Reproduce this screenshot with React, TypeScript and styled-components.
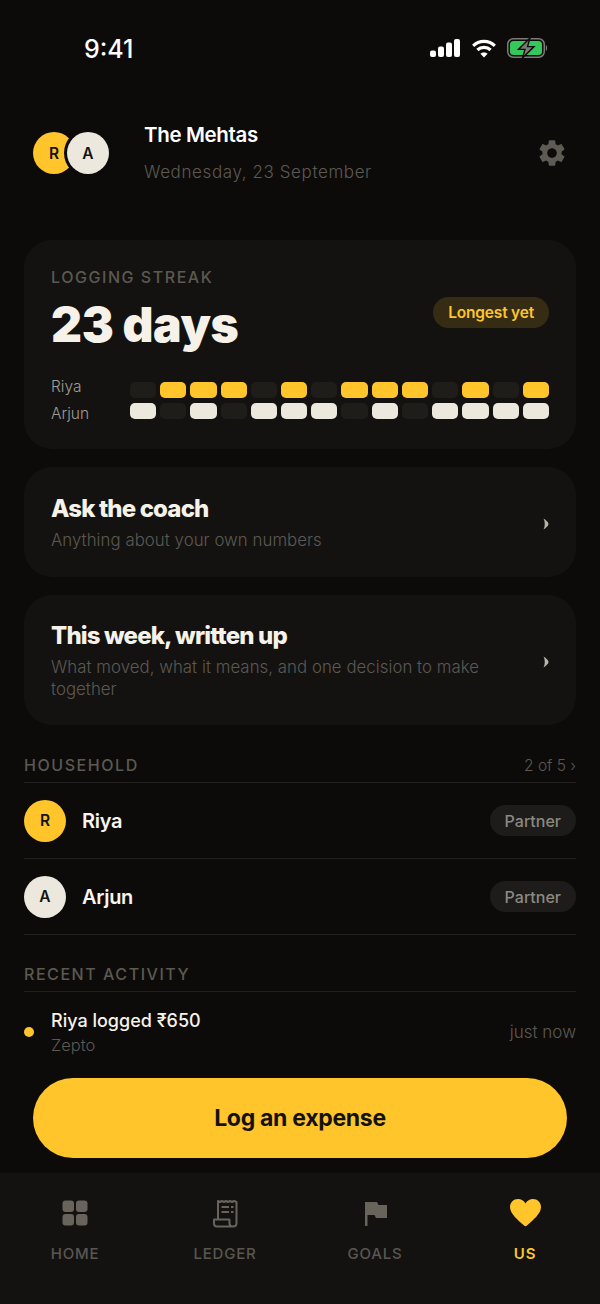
import React from 'react';
import styled, { createGlobalStyle } from 'styled-components';
import { MdSettings } from 'react-icons/md';

const FONT = `"Inter", "Liberation Sans", sans-serif`;
const PAGE = '#0c0b0a';
const YELLOW = '#ffc52b';
const CREAM = '#ece8de';
const MUTED = '#5c5952';

const GlobalStyle = createGlobalStyle`
  html, body {
    margin: 0;
    padding: 0;
    background: ${PAGE};
  }
  * {
    box-sizing: border-box;
  }
`;

const Screen = styled.div`
  position: relative;
  width: 600px;
  height: 1304px;
  overflow: hidden;
  background: ${PAGE};
  font-family: ${FONT};
  color: #fff;
  display: flex;
  flex-direction: column;
`;

const StatusBar = styled.div`
  height: 96px;
  flex-shrink: 0;
  padding: 34px 52px 0 84px;
  display: flex;
  justify-content: space-between;
  align-items: flex-start;
`;

const Clock = styled.div`
  font-size: 25px;
  line-height: 30px;
  font-weight: 500;
`;

const StatusIcons = styled.div`
  display: flex;
  align-items: center;
  gap: 11.5px;
  height: 28px;
`;

const Content = styled.div`
  flex: 1;
  min-height: 0;
  padding: 0 24px;
  display: flex;
  flex-direction: column;
`;

const Header = styled.div`
  height: 114px;
  margin-bottom: 30px;
  flex-shrink: 0;
  display: flex;
  align-items: center;
  padding: 0 8px 0 9px;
`;

const AvatarStack = styled.div`
  display: flex;
  width: 111px;
`;

const Avatar = styled.div<{ $tone: 'yellow' | 'cream'; $overlap?: boolean }>`
  width: 42px;
  height: 42px;
  border-radius: 50%;
  background: ${p => (p.$tone === 'yellow' ? YELLOW : CREAM)};
  color: #141210;
  display: flex;
  align-items: center;
  justify-content: center;
  font-size: 15.5px;
  font-weight: 600;
  flex-shrink: 0;
  ${p => p.$overlap && `margin-left: -7px; box-shadow: 0 0 0 3px ${PAGE}; position: relative; left: -1px;`}
`;

const HeaderText = styled.div`
  flex: 1;
  padding-bottom: 2px;
`;

const FamilyName = styled.div`
  font-size: 20.5px;
  line-height: 26px;
  font-weight: 600;
  letter-spacing: -0.35px;
`;

const DateLine = styled.div`
  margin-top: 13px;
  font-size: 17px;
  line-height: 22px;
  font-weight: 300;
  color: ${MUTED};
  letter-spacing: 0.6px;
`;

const Card = styled.div`
  background: #131211;
  border-radius: 28px;
  padding: 0 27px;
  flex-shrink: 0;
`;

const StreakCard = styled(Card)`
  height: 209px;
  padding-top: 27px;
  margin-bottom: 18px;
`;

const Eyebrow = styled.div`
  font-size: 16px;
  line-height: 20px;
  font-weight: 500;
  letter-spacing: 1.55px;
  color: #5c5951;
`;

const StreakTop = styled.div`
  margin-top: 10px;
  display: flex;
  justify-content: space-between;
  align-items: flex-start;
`;

const Days = styled.div`
  font-size: 48px;
  line-height: 56px;
  font-weight: 900;
  letter-spacing: -0.4px;
  color: #f6f2e9;
`;

const Badge = styled.div`
  height: 31px;
  padding: 0 15px;
  border-radius: 16px;
  background: #362c13;
  color: ${YELLOW};
  font-size: 15.5px;
  font-weight: 600;
  letter-spacing: -0.2px;
  display: flex;
  align-items: center;
`;

const Streak = styled.div`
  margin-top: 20px;
  display: flex;
  align-items: center;
`;

const StreakNames = styled.div`
  width: 79px;
  font-size: 15.5px;
  line-height: 27px;
  font-weight: 300;
  color: #a09d95;
`;

const Rows = styled.div`
  flex: 1;
  display: flex;
  flex-direction: column;
  gap: 5px;
`;

const Cells = styled.div`
  display: grid;
  grid-template-columns: repeat(14, 1fr);
  gap: 4px;
`;

const Cell = styled.div<{ $fill: string }>`
  height: 16px;
  border-radius: 5px;
  background: ${p => p.$fill};
`;

const LinkCard = styled(Card)<{ $height: number }>`
  height: ${p => p.$height}px;
  margin-bottom: 18px;
  display: flex;
  align-items: center;
  justify-content: space-between;
`;

const LinkTitle = styled.div`
  font-size: 24px;
  line-height: 30px;
  font-weight: 800;
  letter-spacing: -0.85px;
  color: #f6f2e9;
`;

const LinkSub = styled.div`
  margin-top: 5px;
  max-width: 450px;
  font-size: 16.8px;
  line-height: 22px;
  font-weight: 300;
  letter-spacing: 0.05px;
  color: ${MUTED};
`;

const Chevron = styled.svg`
  flex-shrink: 0;
  margin-top: 4px;
`;

const SectionHead = styled.div<{ $top: number }>`
  margin-top: ${p => p.$top}px;
  height: 30px;
  padding-bottom: 5px;
  border-bottom: 1px solid #1f1e1c;
  display: flex;
  align-items: center;
  justify-content: space-between;
`;

const SectionMeta = styled.div`
  font-size: 15.5px;
  font-weight: 300;
  color: ${MUTED};
`;

const MemberRow = styled.div`
  height: 76px;
  border-bottom: 1px solid #1f1e1c;
  display: flex;
  align-items: center;
  gap: 16px;
`;

const MemberName = styled.div`
  flex: 1;
  font-size: 20px;
  font-weight: 600;
  letter-spacing: -0.3px;
  color: #f8f5ee;
`;

const RolePill = styled.div`
  height: 31px;
  padding: 0 15px;
  border-radius: 16px;
  background: #1d1c1a;
  color: #8c8981;
  font-size: 16px;
  font-weight: 500;
  display: flex;
  align-items: center;
`;

const ActivityRow = styled.div`
  height: 80px;
  display: flex;
  align-items: center;
`;

const Dot = styled.div`
  width: 10px;
  height: 10px;
  border-radius: 50%;
  background: ${YELLOW};
  margin-right: 17px;
`;

const ActivityText = styled.div`
  flex: 1;
`;

const ActivityTitle = styled.div`
  font-size: 18px;
  line-height: 24px;
  font-weight: 500;
  color: #f6f2e9;
`;

const ActivitySub = styled.div`
  margin-top: 1px;
  font-size: 16.5px;
  line-height: 22px;
  font-weight: 300;
  color: ${MUTED};
`;

const ActivityTime = styled.div`
  font-size: 17px;
  font-weight: 300;
  color: ${MUTED};
`;

const Cta = styled.button`
  position: absolute;
  left: 33px;
  right: 33px;
  bottom: 146px;
  height: 80px;
  border: none;
  border-radius: 40px;
  background: ${YELLOW};
  color: #141210;
  font-family: ${FONT};
  font-size: 23px;
  font-weight: 700;
  letter-spacing: -0.3px;
`;

const TabBar = styled.nav`
  height: 131px;
  flex-shrink: 0;
  background: #131211;
  display: grid;
  grid-template-columns: repeat(4, 1fr);
`;

const Tab = styled.div<{ $active?: boolean }>`
  padding-top: 24px;
  display: flex;
  flex-direction: column;
  align-items: center;
  color: ${p => (p.$active ? YELLOW : '#5a5750')};
  font-size: 15px;
  font-weight: ${p => (p.$active ? 600 : 500)};
  letter-spacing: 0.8px;
`;

const TabIcon = styled.svg<{ $active?: boolean }>`
  width: 34px;
  height: 34px;
  margin-bottom: 13px;
  color: ${p => (p.$active ? YELLOW : '#68645b')};
`;

const RIYA = [0, 1, 1, 1, 0, 1, 0, 1, 1, 1, 0, 1, 0, 1];
const ARJUN = [1, 0, 1, 0, 1, 1, 1, 0, 1, 0, 1, 1, 1, 1];

const SignalIcon = () => (
  <svg width="30" height="18" viewBox="0 0 30 18" fill="#fff">
    <rect x="0" y="11.5" width="6" height="6.5" rx="2" />
    <rect x="8" y="7.5" width="6" height="10.5" rx="2" />
    <rect x="16" y="3.5" width="6" height="14.5" rx="2" />
    <rect x="24" y="0" width="6" height="18" rx="2" />
  </svg>
);

const WifiIcon = () => (
  <svg width="24" height="19" viewBox="0 0 24 19" fill="none" stroke="#fff" strokeWidth="3.2">
    <path d="M1.2 6.8 C7 1 17 1 22.8 6.8" />
    <path d="M5.4 11 C9 7.6 15 7.6 18.6 11" />
    <path d="M12 18.6 L8.4 14.8 C10.2 13.2 13.8 13.2 15.6 14.8 Z" fill="#fff" stroke="none" />
  </svg>
);

const BatteryIcon = () => (
  <svg width="41" height="20" viewBox="0 0 41 20">
    <rect x="0.75" y="0.75" width="36.5" height="18.5" rx="5.5" fill="none" stroke="#7b7b78" strokeWidth="1.5" />
    <rect x="3" y="3" width="32" height="14" rx="3.5" fill="#34c759" />
    <path d="M38.8 7 C40.6 7.5 40.6 12.5 38.8 13 Z" fill="#7b7b78" />
    <path d="M23 0 L11.5 11.4 H18 L15.5 20 L27 8.6 H20.5 Z" fill="#7a7a76" stroke={PAGE} strokeWidth="1.4" />
  </svg>
);

const HomeIcon = () => (
  <TabIcon viewBox="0 0 34 34" fill="currentColor">
    <rect x="4.5" y="3.5" width="11.5" height="11.5" rx="3" />
    <rect x="18" y="3.5" width="11.5" height="11.5" rx="3" />
    <rect x="4.5" y="17" width="11.5" height="11.5" rx="3" />
    <rect x="18" y="17" width="11.5" height="11.5" rx="3" />
  </TabIcon>
);

const LedgerIcon = () => (
  <TabIcon viewBox="0 0 34 34" fill="none" stroke="currentColor" strokeWidth="2">
    <path
      d="M10 22.5 V4 L12 5 L14 4 L16 5 L18 4 L20 5 L22 4 L24 5 L26 4 L28.5 5 V26 C28.5 28.2 27 29.5 25 29.5 H9 C7 29.5 6 28.2 6 26.5 V22.5 H21.5 V26.5 C21.5 28.2 23 29.5 25 29.5"
      strokeLinejoin="round"
    />
    <path d="M13.5 10 H21 M13.5 15 H21 M23 10 H25.5 M23 15 H25.5" />
  </TabIcon>
);

const FlagIcon = () => (
  <TabIcon viewBox="0 0 34 34" fill="currentColor">
    <path d="M7 5 H19 L20.5 8 H29 V21 H18 L16.5 18 H9.5 V29 H7 Z" />
  </TabIcon>
);

const HeartIcon = () => (
  <TabIcon $active viewBox="0 0 34 34" fill="currentColor">
    <path d="M17.5 29.2 C16.6 29.2 16 28.6 15.2 27.8 C10 23 2 16.8 2 10 C2 5.4 5.6 2 10 2 C13.2 2 16 3.6 17.5 6.4 C19 3.6 21.8 2 25 2 C29.4 2 33 5.4 33 10 C33 16.8 25 23 19.8 27.8 C19 28.6 18.4 29.2 17.5 29.2 Z" />
  </TabIcon>
);

const SmallChevron = () => (
  <Chevron width="6" height="12" viewBox="0 0 6 12" fill="#b8b4aa">
    <path d="M0.5 0.5 C3 2 5.5 4.2 5.5 6 C5.5 7.8 3 10 0.5 11.5 C2.2 8.5 2.2 3.5 0.5 0.5 Z" />
  </Chevron>
);

export default function App() {
  return (
    <Screen>
      <GlobalStyle />
      <StatusBar>
        <Clock>9:41</Clock>
        <StatusIcons>
          <SignalIcon />
          <WifiIcon />
          <BatteryIcon />
        </StatusIcons>
      </StatusBar>
      <Content>
        <Header>
          <AvatarStack>
            <Avatar $tone="yellow">R</Avatar>
            <Avatar $tone="cream" $overlap>A</Avatar>
          </AvatarStack>
          <HeaderText>
            <FamilyName>The Mehtas</FamilyName>
            <DateLine>Wednesday, 23 September</DateLine>
          </HeaderText>
          <MdSettings size={32} color="#5e5b54" />
        </Header>

        <StreakCard>
          <Eyebrow>LOGGING STREAK</Eyebrow>
          <StreakTop>
            <Days>23 days</Days>
            <Badge>Longest yet</Badge>
          </StreakTop>
          <Streak>
            <StreakNames>
              <div>Riya</div>
              <div>Arjun</div>
            </StreakNames>
            <Rows>
              <Cells>
                {RIYA.map((on, i) => (
                  <Cell key={i} $fill={on ? YELLOW : '#1f1d1a'} />
                ))}
              </Cells>
              <Cells>
                {ARJUN.map((on, i) => (
                  <Cell key={i} $fill={on ? CREAM : '#1f1d1a'} />
                ))}
              </Cells>
            </Rows>
          </Streak>
        </StreakCard>

        <LinkCard $height={110}>
          <div>
            <LinkTitle>Ask the coach</LinkTitle>
            <LinkSub>Anything about your own numbers</LinkSub>
          </div>
          <SmallChevron />
        </LinkCard>

        <LinkCard $height={130}>
          <div>
            <LinkTitle>This week, written up</LinkTitle>
            <LinkSub>What moved, what it means, and one decision to make together</LinkSub>
          </div>
          <SmallChevron />
        </LinkCard>

        <SectionHead $top={10}>
          <Eyebrow>HOUSEHOLD</Eyebrow>
          <SectionMeta>2 of 5 ›</SectionMeta>
        </SectionHead>
        <MemberRow>
          <Avatar $tone="yellow">R</Avatar>
          <MemberName>Riya</MemberName>
          <RolePill>Partner</RolePill>
        </MemberRow>
        <MemberRow>
          <Avatar $tone="cream">A</Avatar>
          <MemberName>Arjun</MemberName>
          <RolePill>Partner</RolePill>
        </MemberRow>

        <SectionHead $top={27}>
          <Eyebrow>RECENT ACTIVITY</Eyebrow>
        </SectionHead>
        <ActivityRow>
          <Dot />
          <ActivityText>
            <ActivityTitle>Riya logged ₹650</ActivityTitle>
            <ActivitySub>Zepto</ActivitySub>
          </ActivityText>
          <ActivityTime>just now</ActivityTime>
        </ActivityRow>
      </Content>

      <Cta>Log an expense</Cta>

      <TabBar>
        <Tab>
          <HomeIcon />
          HOME
        </Tab>
        <Tab>
          <LedgerIcon />
          LEDGER
        </Tab>
        <Tab>
          <FlagIcon />
          GOALS
        </Tab>
        <Tab $active>
          <HeartIcon />
          US
        </Tab>
      </TabBar>
    </Screen>
  );
}
